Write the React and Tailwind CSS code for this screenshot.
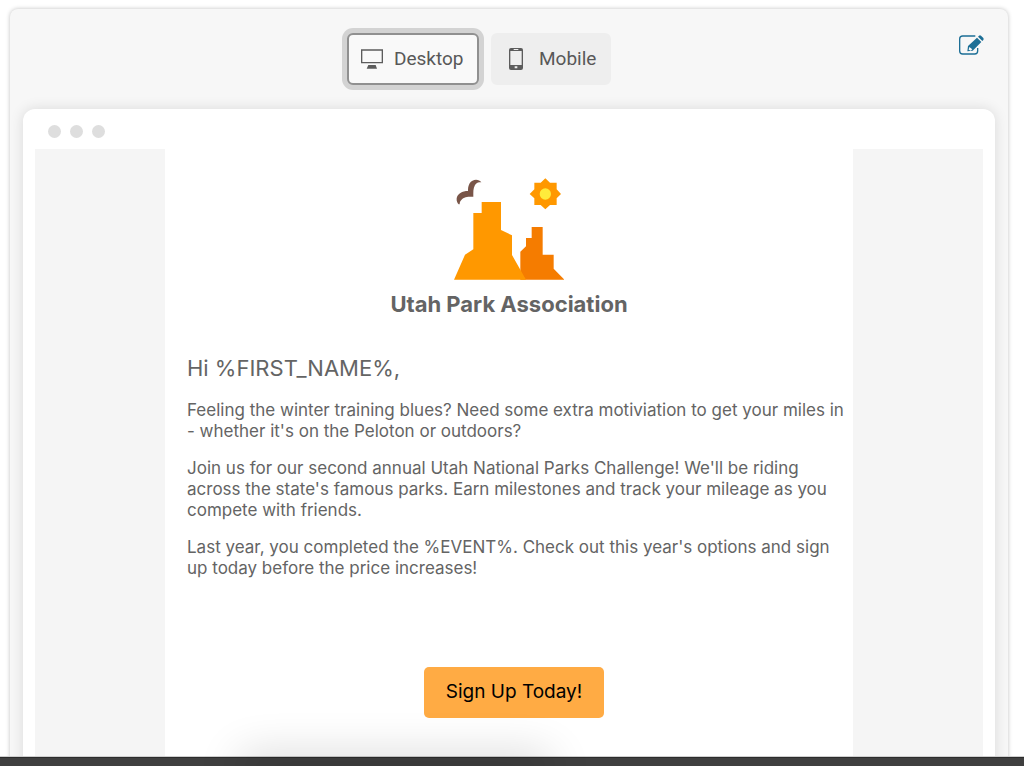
import React, { useState } from "react";

const PARAGRAPHS = [
  "Feeling the winter training blues? Need some extra motiviation to get your miles in - whether it's on the Peloton or outdoors?",
  "Join us for our second annual Utah National Parks Challenge! We'll be riding across the state's famous parks. Earn milestones and track your mileage as you compete with friends.",
  "Last year, you completed the %EVENT%. Check out this year's options and sign up today before the price increases!",
];

function DesktopIcon() {
  return (
    <svg viewBox="0 0 66 60" className="h-5 w-[22px] shrink-0" fill="#5c5c5c" aria-hidden="true">
      <path fillRule="evenodd" d="M0 1h66v42H0zM4 5v34h58V5z" />
      <path d="M22 48h22l4 11H17z" />
    </svg>
  );
}

function MobileIcon() {
  return (
    <svg viewBox="0 0 42 66" className="h-[22px] w-[14px] shrink-0" fill="#5c5c5c" aria-hidden="true">
      <path
        fillRule="evenodd"
        d="M6 0h30a6 6 0 0 1 6 6v54a6 6 0 0 1-6 6H6a6 6 0 0 1-6-6V6a6 6 0 0 1 6-6zM4 9v42h34V9zM14 3v3h14V3zM17 55v6h8v-6z"
      />
    </svg>
  );
}

function EditIcon() {
  return (
    <svg viewBox="0 0 75 60" className="h-5 w-[25px]" aria-hidden="true">
      <path
        d="M49 3H11a9 9 0 0 0-9 9v36a9 9 0 0 0 9 9h36a9 9 0 0 0 9-9V39"
        fill="none"
        stroke="#1d6f96"
        strokeWidth="4"
      />
      <path
        fillRule="evenodd"
        fill="#1d6f96"
        d="M25 49l2-16L54 8l13 13-26 26zM31 36l-2 8 6 3 5-4zM57 5l3-3q3-2 6 0l7 7q2 3 0 6l-3 3z"
      />
    </svg>
  );
}

function ParkLogo() {
  return (
    <svg viewBox="72 40 330 306" className="h-[102px] w-[110px]" role="img" aria-label="Utah Park Association">
      <path fill="#f57c00" d="M271 345v-84l17-16v-25h17v-33h33v83h33v42l32 33z" />
      <path fill="#ff9800" d="M72 345l33-75 25-16V145h25v-33h58v84l33 16v59l42 74z" />
      <path
        fill="#795548"
        d="M154 53C147 42 127 42 119 56c-5 9-5 16-5 23-17 0-32 8-34 22-1 8 2 14 6 18l3 0c0-5 1-9 5-13 8-11 22-10 36-10 0-12-1-25 5-35 5-8 12-8 19-8z"
      />
      <path
        fill="#ff9800"
        d="M346 41l14 13h20v20l13 14-13 13v20h-20l-14 13-14-13h-19v-20l-14-13 14-14V54h19z"
      />
      <circle cx="346" cy="88" r="17" fill="#ffeb3b" />
    </svg>
  );
}

function EmailPreview() {
  return (
    <div className="bg-[#f5f5f5]">
      <div className="mx-auto min-h-screen max-w-[688px] bg-white pt-[29px] text-[#646464]">
        <div className="flex flex-col items-center">
          <ParkLogo />
          <h1 className="mt-2 text-[22px] leading-8 font-bold">Utah Park Association</h1>
        </div>
        <div className="pr-1 pl-[22px]">
          <h2 className="mt-8 text-[22px] leading-8">Hi %FIRST_NAME%,</h2>
          <div className="mt-4 flex flex-col gap-4 text-[17px] leading-[21px]">
            {PARAGRAPHS.map((text) => (
              <p key={text}>{text}</p>
            ))}
          </div>
        </div>
        <div className="mt-[88px] flex justify-center pl-[10px]">
          <button type="button" className="h-[51px] w-[180px] rounded-[5px] bg-[#ffab44] text-[19px] text-black">
            Sign Up Today!
          </button>
        </div>
      </div>
    </div>
  );
}

export default function App() {
  const [view, setView] = useState("desktop");

  const tabClass = (name) =>
    view === name
      ? "border-2 border-[#909090] bg-[#f9f9f9] ring-[5px] ring-[#d3d3d3]"
      : "border-2 border-[#eeeeee] bg-[#eeeeee]";

  return (
    <div className="flex h-screen flex-col overflow-hidden bg-white font-['Inter',sans-serif]">
      <main className="min-h-0 flex-1 overflow-hidden pt-[9px] pr-4 pl-[10px]">
        <section className="rounded-lg bg-[#f7f7f7] px-[13px] pt-6 shadow-[0_0_4px_rgba(0,0,0,0.25)]">
          <header className="grid grid-cols-[1fr_auto_1fr] font-['Roboto',sans-serif] text-[19px] text-[#585858]">
            <div className="col-start-2 flex gap-3 pr-[60px]">
              <button
                type="button"
                onClick={() => setView("desktop")}
                className={`flex h-[52px] w-[132px] items-center gap-[11px] rounded-md px-3 ${tabClass("desktop")}`}
              >
                <DesktopIcon />
                Desktop
              </button>
              <button
                type="button"
                onClick={() => setView("mobile")}
                className={`flex h-[52px] w-[120px] items-center gap-4 rounded-md px-4 ${tabClass("mobile")}`}
              >
                <MobileIcon />
                Mobile
              </button>
            </div>
            <button type="button" aria-label="Edit email" className="mt-[2px] mr-[11px] self-start justify-self-end">
              <EditIcon />
            </button>
          </header>

          <div className="mt-6 rounded-xl bg-white px-3 shadow-[0_0_14px_rgba(0,0,0,0.12)]">
            <div className="flex h-10 items-center gap-[9px] px-[13px] pt-1">
              <span className="size-[13px] rounded-full bg-[#dedede]" />
              <span className="size-[13px] rounded-full bg-[#dedede]" />
              <span className="size-[13px] rounded-full bg-[#dedede]" />
            </div>
            <EmailPreview />
          </div>
        </section>
      </main>

      <footer className="relative h-[9px] shrink-0 border-t border-[#2c2c2c] bg-[#3f3f3f] shadow-[0_-1px_0_#cfcfcf]">
        {/* soft shadow cast above the bar */}
        <div className="absolute top-full left-[250px] h-2 w-[290px] rounded-full shadow-[0_0_44px_12px_rgba(0,0,0,0.16)]" />
      </footer>
    </div>
  );
}
